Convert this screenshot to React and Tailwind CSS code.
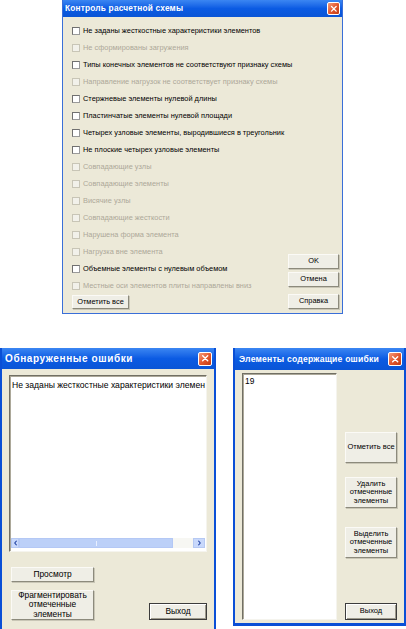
import React from "react";

const FONT = { fontFamily: '"Liberation Sans", Arial, sans-serif' };

function CloseBtn({ className }) {
  return (
    <div
      className={
        "flex items-center justify-center rounded-[2px] border border-white bg-linear-to-br from-[#f29a7a] via-[#e3582e] to-[#c23a12] " +
        className
      }
    >
      <svg viewBox="0 0 10 10" className="h-[70%] w-[70%]">
        <path d="M2 2L8 8M8 2L2 8" stroke="white" strokeWidth="1.7" strokeLinecap="round" />
      </svg>
    </div>
  );
}

function Btn({ className, children, dark }) {
  return (
    <div
      className={
        (dark
          ? "border border-[#3c3c3c] shadow-[inset_1px_1px_0_#fff,inset_-1px_-1px_0_#9d9a8c] "
          : "border border-t-[#fbfaf6] border-l-[#fbfaf6] border-r-[#8c8a7c] border-b-[#8c8a7c] shadow-[1px_1px_0_#c9c6b6] ") +
        "flex items-center justify-center whitespace-nowrap bg-[#efeee6] text-center leading-[1.15] text-black " +
        className
      }
    >
      {children}
    </div>
  );
}

const rows = [
  ["Не заданы жесткостные характеристики элементов", true],
  ["Не сформированы загружения", false],
  ["Типы конечных элементов не соответствуют признаку схемы", true],
  ["Направление нагрузок не соответствует признаку схемы", false],
  ["Стержневые элементы нулевой длины", true],
  ["Пластинчатые элементы нулевой площади", true],
  ["Четырех узловые элементы, выродившиеся в  треугольник", true],
  ["Не плоские четырех узловые элементы", true],
  ["Совпадающие узлы", false],
  ["Совпадающие элементы", false],
  ["Висячие узлы", false],
  ["Совпадающие жесткости", false],
  ["Нарушена форма элемента", false],
  ["Нагрузка вне элемента", false],
  ["Объемные элементы с нулевым объемом", true],
  ["Местные оси элементов плиты направлены вниз", false],
];

function Dialog1() {
  return (
    <div className="ml-[62px] flex h-[314px] w-[281px] flex-col border-x border-b border-x-[#3a6fd8] border-b-[#3a6fd8] bg-[#ece9d8]">
      <div className="flex h-[17px] shrink-0 items-center justify-between bg-linear-to-b from-[#3b86f2] via-[#0b5be3] to-[#0a55d6] pl-[2px] pr-[2px]">
        <span className="text-[8.3px] font-bold tracking-[0.2px] text-white">Контроль расчетной схемы</span>
        <CloseBtn className="h-[13px] w-[13px]" />
      </div>
      <div className="flex min-h-0 flex-1 pt-[5px] pb-[4px] pr-[3px]">
        <div className="flex min-w-0 flex-1 flex-col pl-[9px]">
          {rows.map(([t, en], i) => (
            <div key={i} className="flex h-[17.07px] items-center whitespace-nowrap">
              <div
                className={
                  "mr-[3px] h-[8px] w-[8px] shrink-0 border " +
                  (en
                    ? "border-[#9a9a9a] border-t-[#707070] border-l-[#707070] bg-white"
                    : "border-[#c8c5b6] bg-[#f2f1ea]")
                }
              />
              <span className={"text-[7.4px] " + (en ? "text-black" : "text-[#aca899]")}>{t}</span>
            </div>
          ))}
          <Btn className="mt-[1px] h-[14px] w-[57px] text-[7.4px]">Отметить все</Btn>
        </div>
        <div className="flex w-[51px] shrink-0 flex-col justify-end">
          <Btn className="h-[15px] text-[7.4px]">OK</Btn>
          <Btn className="mt-[3px] h-[15px] text-[7.4px]">Отмена</Btn>
          <Btn className="mt-[7px] h-[15px] text-[7.4px]">Справка</Btn>
        </div>
      </div>
    </div>
  );
}

function TitleBar({ title, h, text }) {
  return (
    <div className={"flex shrink-0 items-center justify-between bg-linear-to-b from-[#3b86f2] via-[#0b5be3] to-[#0a55d6] pl-[3px] pr-[2px] " + h}>
      <span className={"whitespace-nowrap font-bold text-white " + text}>{title}</span>
      <CloseBtn className="h-[14px] w-[14px] shrink-0" />
    </div>
  );
}

function Dialog2() {
  return (
    <div className="flex h-[281px] w-[216px] shrink-0 flex-col border-x-[2px] border-[#0a4fd6] bg-[#ece9d8]">
      <TitleBar title="Обнаруженные ошибки" h="h-[21px]" text="text-[10px] tracking-[0.6px]" />
      <div className="flex flex-1 flex-col px-[7px] pt-[6px]">
        <div className="flex h-[177px] flex-col border border-t-[#716f64] border-l-[#716f64] border-r-[#f5f4ee] border-b-[#f5f4ee] bg-white shadow-[inset_1px_1px_0_#aca899]">
          <div className="flex-1 overflow-hidden whitespace-nowrap pl-[2px] pt-[3px] text-[8.6px] text-black">
            Не заданы жесткостные характеристики элемен
          </div>
          <div className="mb-[3px] ml-[1px] mr-[1px] flex h-[10px] items-stretch">
            <div className="flex w-[8px] items-center justify-center border border-[#b6c9f3] bg-[#c8d8fb]">
              <svg viewBox="0 0 6 8" className="h-[6px] w-[5px]"><path d="M4.5 1L2 4L4.5 7" stroke="#1d3fa0" strokeWidth="1.4" fill="none" /></svg>
            </div>
            <div className="flex w-[154px] items-center justify-center border border-[#b4c8f5] bg-[#bcd0f8]">
              <div className="h-[5px] w-[1px] bg-[#e8efff]" />
            </div>
            <div className="flex-1 bg-[#f7f7f3]" />
            <div className="flex w-[12px] items-center justify-center border border-[#b6c9f3] bg-[#c8d8fb]">
              <svg viewBox="0 0 6 8" className="h-[6px] w-[5px]"><path d="M1.5 1L4 4L1.5 7" stroke="#1d3fa0" strokeWidth="1.4" fill="none" /></svg>
            </div>
          </div>
        </div>
        <div className="mt-[15px] flex items-end justify-between pl-[2px]">
          <div className="flex flex-col">
            <Btn className="h-[15px] w-[83px] text-[8.4px]">Просмотр</Btn>
            <Btn className="mt-[8px] h-[30px] w-[83px] text-[8.4px]">
              Фрагментировать
              <br />
              отмеченные
              <br />
              элементы
            </Btn>
          </div>
          <Btn dark className="h-[17px] w-[58px] text-[8.4px]">Выход</Btn>
        </div>
      </div>
    </div>
  );
}

function Dialog3() {
  return (
    <div className="flex h-[278px] w-[173px] shrink-0 flex-col border-x-[2px] border-b-[3px] border-[#0a4fd6] bg-[#ece9d8]">
      <TitleBar title="Элементы содержащие ошибки" h="h-[22px]" text="text-[8.6px] tracking-[0.2px] pl-[1px]" />
      <div className="flex flex-1 gap-[8px] pl-[7px] pr-[6px] pt-[3px] pb-[3px]">
        <div className="h-[247px] w-[95px] border border-t-[#716f64] border-l-[#716f64] border-r-[#f5f4ee] border-b-[#f5f4ee] bg-white pl-[2px] pt-[1px] text-[8.4px] text-black shadow-[inset_1px_1px_0_#aca899]">
          19
        </div>
        <div className="flex w-[52px] flex-col pt-[59px]">
          <Btn className="h-[31px] text-[7.5px]">Отметить все</Btn>
          <Btn className="mt-[14px] h-[31px] text-[7.5px]">
            Удалить
            <br />
            отмеченные
            <br />
            элементы
          </Btn>
          <Btn className="mt-[19px] h-[31px] text-[7.5px]">
            Выделить
            <br />
            отмеченные
            <br />
            элементы
          </Btn>
          <Btn dark className="mt-auto h-[17px] text-[7.5px]">Выход</Btn>
        </div>
      </div>
    </div>
  );
}

export default function App() {
  return (
    <div className="h-[629px] w-[406px] overflow-hidden bg-white" style={FONT}>
      <Dialog1 />
      <div className="mt-[34px] flex gap-[17px]">
        <Dialog2 />
        <Dialog3 />
      </div>
    </div>
  );
}
